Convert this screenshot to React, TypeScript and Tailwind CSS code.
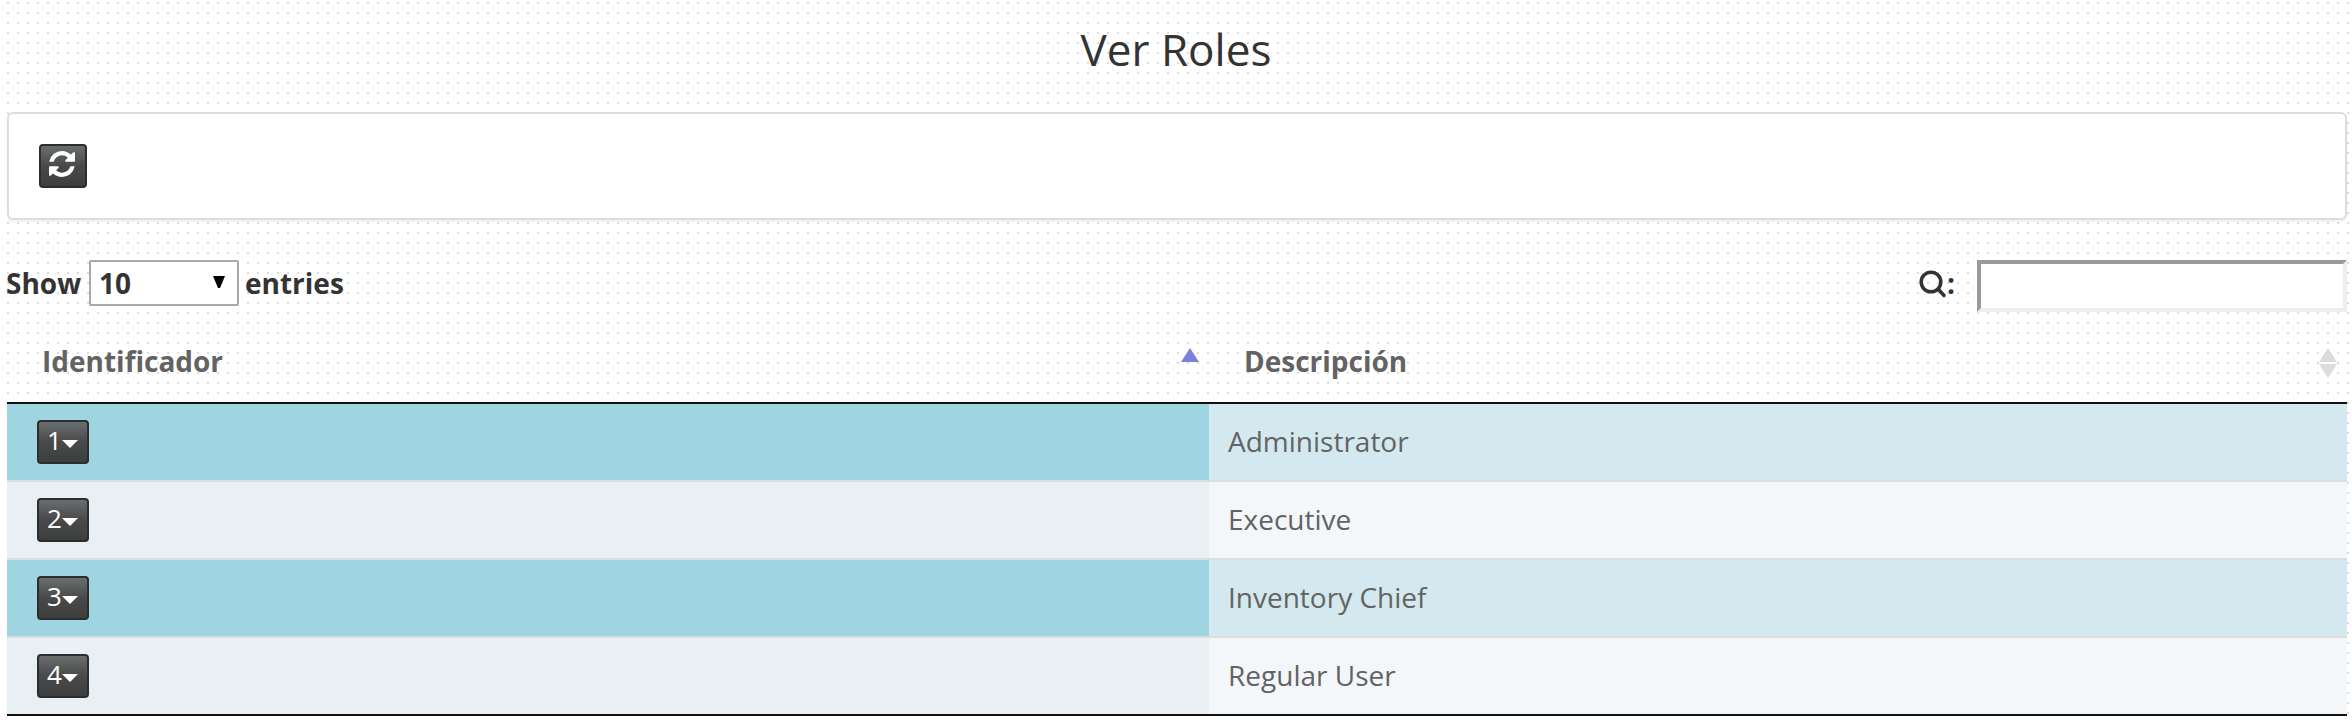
const roles = [
  { id: 1, name: 'Administrator' },
  { id: 2, name: 'Executive' },
  { id: 3, name: 'Inventory Chief' },
  { id: 4, name: 'Regular User' },
];

const darkButton =
  'flex h-[44px] items-center rounded-[4px] border-2 border-[#2c2e2e] bg-linear-to-b from-[#6b6e6f] via-[#484a49] to-[#3d3f3e] text-white';

function RefreshIcon() {
  return (
    <svg viewBox="0 0 1536 1536" className="size-[26px]" fill="currentColor">
      <path d="M1511 928q0 5 -1 7q-64 268 -268 434.5t-478 166.5q-146 0 -282.5 -55t-243.5 -157l-129 129q-19 19 -45 19t-45 -19t-19 -45v-448q0 -26 19 -45t45 -19h448q26 0 45 19t19 45t-19 45l-137 137q71 66 161 102t187 36q134 0 250 -65t186 -179q11 -17 53 -117q8 -23 30 -23h192q13 0 22.5 9.5t9.5 22.5zM1536 128v448q0 26 -19 45t-45 19h-448q-26 0 -45 -19t-19 -45t19 -45l138 -138q-148 -137 -349 -137q-134 0 -250 65t-186 179q-11 17 -53 117q-8 23 -30 23h-199q-13 0 -22.5 -9.5t-9.5 -22.5v-7q65 -268 270 -434.5t480 -166.5q146 0 284 55.5t245 156.5l130 -129q19 -19 45 -19t45 19t19 45z" />
    </svg>
  );
}

export default function App() {
  return (
    <div className="h-[721px] overflow-hidden bg-white font-['Open_Sans',sans-serif] text-[28px] leading-[40px] text-[#333]">
      <div className="ml-[7px] h-[716px] bg-[linear-gradient(#fff_8px,transparent_8px),linear-gradient(90deg,#dcdcdc_2px,#fff_2px)] bg-size-[10px_10px] bg-position-[0_4px,0_4px] pr-[5px]">
        <h1 className="flex h-[112px] items-center justify-center pr-[2px] pb-[14px] text-[44px] leading-[60px]">Ver Roles</h1>

        <section className="flex h-[108px] items-start rounded-[6px] border-2 border-[#ddd] bg-white pt-[30px] pl-[30px] shadow-[0_2px_2px_rgba(0,0,0,0.05)]">
          <button className={`${darkButton} w-[48px] pb-[4px] pl-[8px]`} aria-label="Recargar">
            <RefreshIcon />
          </button>
        </section>

        <div className="flex h-[92px] items-start justify-between pt-[40px] font-bold">
          <label className="flex items-center">
            <span className="-ml-px w-[83px] whitespace-nowrap">Show</span>
            <span className="flex h-[46px] w-[150px] items-center justify-between rounded-[2px] border-2 border-[#a9a9a9] bg-white pr-[12px] pl-[8px]">
              10
              <svg viewBox="0 0 12 12" className="mb-[2px] size-[12px]">
                <path d="M0 0H12L7 12H5Z" fill="#000" />
              </svg>
            </span>
            <span className="ml-[6px]">entries</span>
          </label>
          <label className="flex items-start">
            <svg viewBox="0 0 30 30" className="mt-[9px] size-[30px]" fill="none" stroke="#333" strokeWidth="3.5">
              <circle cx="14" cy="13" r="9.8" />
              <path d="M21 20L27 26.5" strokeLinecap="round" />
            </svg>
            <span className="mt-[3px]">:</span>
            <input className="ml-[22px] h-[52px] w-[370px] border-4 border-t-[#9a9a9a] border-r-[#eee] border-b-[#eee] border-l-[#9a9a9a] bg-white" />
          </label>
        </div>

        <table className="w-full table-fixed border-separate border-spacing-0 text-left text-[#636363]">
          <colgroup>
            <col className="w-[1202px]" />
            <col />
          </colgroup>
          <thead>
            <tr className="h-[92px]">
              <th className="border-b-2 border-[#111] p-0 pt-[8px] pl-[35px] font-bold">
                <div className="flex items-center justify-between pr-[10px]">
                  Identificador
                  <svg viewBox="0 0 18 14" className="mb-[12px] h-[14px] w-[18px]">
                    <path d="M9 0L18 14H0Z" fill="#7c80dd" />
                  </svg>
                </div>
              </th>
              <th className="border-b-2 border-[#111] p-0 pt-[8px] pl-[35px] font-bold">
                <div className="flex items-center justify-between pr-[10px]">
                  Descripción
                  <svg viewBox="0 0 18 30" className="mt-[4px] h-[30px] w-[18px]">
                    <path d="M0 14H18V16H0Z" fill="#fff" />
                    <path d="M9 0L18 14H0ZM0 16H18L9 30Z" fill="#dcdcdc" />
                  </svg>
                </div>
              </th>
            </tr>
          </thead>
          <tbody>
            {roles.map((role, i) => {
              const odd = i % 2 === 0;
              const line = i === roles.length - 1 ? 'border-[#111]' : 'border-[#ddd]';
              return (
                <tr key={role.id} className="h-[78px]">
                  <td className={`border-b-2 p-0 pl-[30px] ${line} ${odd ? 'bg-[#9fd4e1]' : 'bg-[#e8f0f3]'}`}>
                    <button className={`${darkButton} w-[52px] pb-[4px] pl-[8px] text-[26px]`}>
                      {role.id}
                      <svg viewBox="0 0 16 8" className="mt-[8px] h-[8px] w-[16px] shrink-0">
                        <path d="M0 0H16L8 8Z" fill="#fff" />
                      </svg>
                    </button>
                  </td>
                  <td className={`border-b-2 p-0 pb-[2px] pl-[19px] ${line} ${odd ? 'bg-[#d3e9ef]' : 'bg-[#f3f7fa]'}`}>{role.name}</td>
                </tr>
              );
            })}
          </tbody>
        </table>
      </div>
    </div>
  );
}
